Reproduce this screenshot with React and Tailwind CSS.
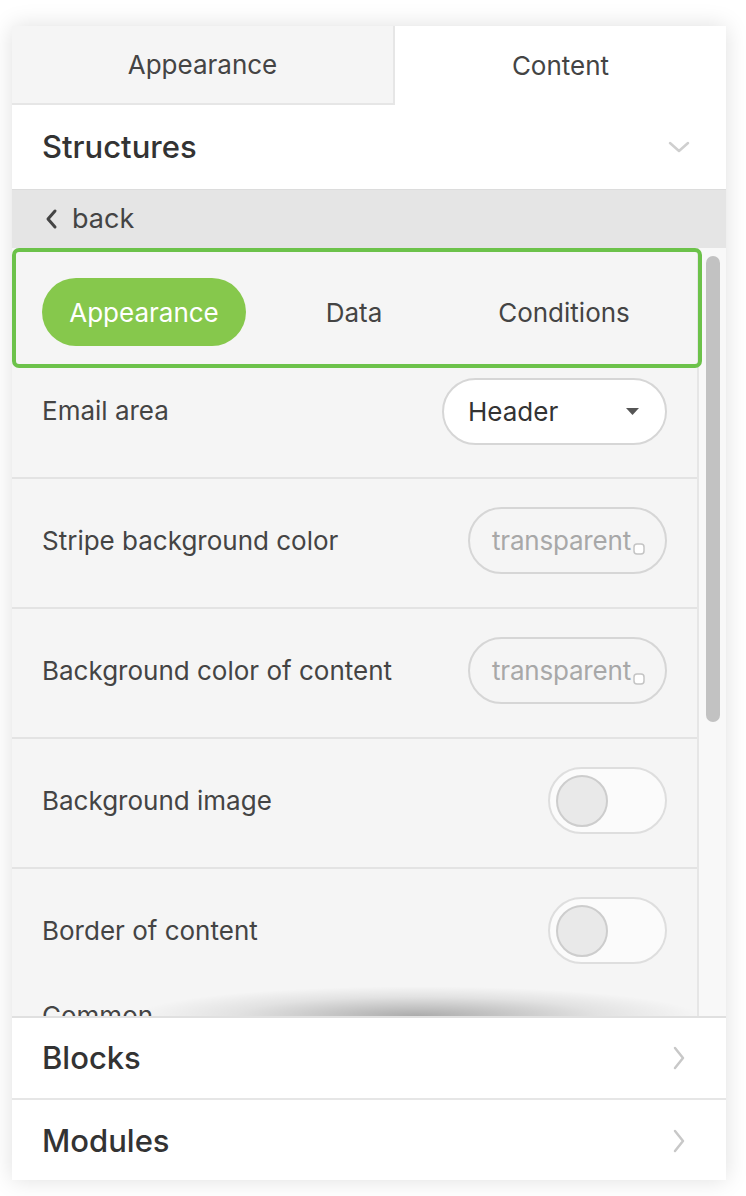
import React from 'react'

const font = { fontFamily: 'Inter, "Noto Sans", sans-serif' }

function ChevronDown() {
  return (
    <svg width="22" height="14" viewBox="0 0 22 14" fill="none">
      <polyline points="2,3 11,11 20,3" stroke="#cfcfcf" strokeWidth="2.5" strokeLinecap="round" strokeLinejoin="round" />
    </svg>
  )
}

function ChevronRight() {
  return (
    <svg width="14" height="24" viewBox="0 0 14 24" fill="none">
      <polyline points="3,2 11,12 3,22" stroke="#c8c8c8" strokeWidth="2.5" strokeLinecap="round" strokeLinejoin="round" />
    </svg>
  )
}

function ColorInput() {
  return (
    <div className="relative w-[199px] h-[67px] rounded-full border-2 border-[#d6d6d6] bg-[#f5f5f5] flex items-center pl-[22px] overflow-hidden">
      <span className="text-[26px] text-[#a8a8a8] whitespace-nowrap tracking-[-0.2px]">transparent</span>
      <svg className="absolute left-[162px] top-[33px]" width="14" height="14" viewBox="0 0 14 14">
        <rect x="2" y="2" width="10" height="10" rx="3" fill="#fff" stroke="#c4c4c4" strokeWidth="1.5" />
      </svg>
    </div>
  )
}

function Toggle() {
  return (
    <div className="w-[119px] h-[67px] rounded-full border-2 border-[#dedede] bg-[#fbfbfb] flex items-center pl-[6px]">
      <div className="w-[52px] h-[52px] rounded-full bg-[#e9e9e9] border-2 border-[#cdcdcd]" />
    </div>
  )
}

function Row({ label, children }) {
  return (
    <div className="h-[130px] shrink-0 border-t-2 border-[#e3e3e3] flex items-center justify-between pl-[30px] pr-[30px] pb-[5px]">
      <span className="text-[26px] text-[#444]">{label}</span>
      {children}
    </div>
  )
}

export default function App() {
  return (
    <div className="min-h-screen bg-white pt-[26px] pl-[12px]" style={font}>
      <div className="w-[714px] h-[1154px] bg-white shadow-[0_0_22px_rgba(0,0,0,0.13)] flex flex-col">
        {/* top tabs */}
        <div className="flex h-[79px] shrink-0">
          <div className="w-[383px] bg-[#f5f5f5] border-r-2 border-b-2 border-[#e6e6e6] flex items-center justify-center text-[26px] text-[#444]">
            Appearance
          </div>
          <div className="flex-1 bg-white flex items-center justify-center text-[26px] text-[#444]">
            Content
          </div>
        </div>

        {/* Structures */}
        <div className="h-[84px] shrink-0 bg-white flex items-center justify-between pl-[30px] pr-[36px]">
          <span className="text-[31px] font-medium text-[#333]">Structures</span>
          <ChevronDown />
        </div>

        {/* back */}
        <div className="h-[59px] shrink-0 bg-[#e5e5e5] border-t border-[#dcdcdc] flex items-center gap-[14px] pl-[32px]">
          <svg width="14" height="22" viewBox="0 0 14 22" fill="none">
            <polyline points="11,3 4,11 11,19" stroke="#444" strokeWidth="3" strokeLinecap="round" strokeLinejoin="round" />
          </svg>
          <span className="text-[27px] text-[#444]">back</span>
        </div>

        {/* scroll area */}
        <div className="relative h-[770px] shrink-0 flex overflow-hidden border-b-2 border-[#e0e0e0]">
          <div className="w-[687px] shrink-0 bg-[#f5f5f5] border-r-2 border-[#e6e6e6] flex flex-col">
            <div className="h-[120px] shrink-0 w-[690px] rounded-[7px] border-[4px] border-[#6cc24a] flex items-center pl-[26px] pt-[8px] relative z-10">
              <div className="w-[204px] h-[68px] shrink-0 rounded-full bg-[#86c84c] flex items-center justify-center text-[26px] text-white">
                Appearance
              </div>
              <div className="w-[216px] shrink-0 flex justify-center text-[26px] text-[#444]">Data</div>
              <div className="w-[204px] shrink-0 flex justify-center text-[26px] text-[#444]">Conditions</div>
            </div>

            <div className="h-[109px] shrink-0 flex items-start justify-between pl-[30px] pr-[30px] pt-[10px]">
              <span className="text-[26px] text-[#444] leading-[67px] -mt-[1px]">Email area</span>
              <div className="w-[225px] h-[67px] rounded-full border-2 border-[#d6d6d6] bg-white flex items-center justify-between pl-[24px] pr-[26px]">
                <span className="text-[26px] text-[#333]">Header</span>
                <svg width="13" height="8" viewBox="0 0 13 8">
                  <polygon points="0,0 13,0 6.5,7" fill="#555" />
                </svg>
              </div>
            </div>

            <Row label="Stripe background color"><ColorInput /></Row>
            <Row label="Background color of content"><ColorInput /></Row>
            <Row label="Background image"><Toggle /></Row>
            <Row label="Border of content"><Toggle /></Row>
            <div className="shrink-0 pl-[30px] mt-[3px] leading-[32px] text-[26px] text-[#444]">Common</div>
          </div>

          <div className="flex-1 bg-[#f8f8f8] pt-[8px] pl-[7px]">
            <div className="w-[14px] h-[466px] rounded-full bg-[#c2c2c2]" />
          </div>

          <div className="absolute bottom-0 left-[120px] w-[570px] h-[30px] bg-[radial-gradient(ellipse_at_50%_100%,rgba(0,0,0,0.3)_0%,rgba(0,0,0,0.08)_45%,transparent_70%)] pointer-events-none z-20" />
        </div>

        {/* Blocks */}
        <div className="h-[82px] shrink-0 bg-white flex items-center justify-between pl-[30px] pr-[40px] border-b-2 border-[#e6e6e6]">
          <span className="text-[31px] font-medium text-[#333]">Blocks</span>
          <ChevronRight />
        </div>

        {/* Modules */}
        <div className="h-[78px] shrink-0 bg-white flex items-center justify-between pl-[30px] pr-[40px] pt-[4px]">
          <span className="text-[31px] font-medium text-[#333]">Modules</span>
          <ChevronRight />
        </div>
      </div>
    </div>
  )
}
